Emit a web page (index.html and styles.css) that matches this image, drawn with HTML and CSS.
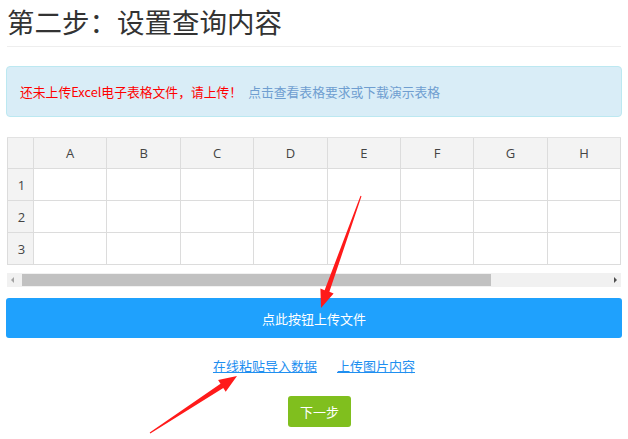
FILE: index.html
```html
<!DOCTYPE html>
<html lang="zh-CN">
<head>
<meta charset="utf-8">
<title>第二步：设置查询内容</title>
<link rel="stylesheet" href="styles.css">
</head>
<body>
<div class="page">
  <h2 class="title">第二步：设置查询内容</h2>
  <div class="alert">
    <span class="warn">还未上传Excel电子表格文件，请上传！</span>
    <a class="alert-link" href="#">点击查看表格要求或下载演示表格</a>
  </div>
  <div class="sheet">
    <div class="grid">
      <div class="cell head corner"></div>
      <div class="cell head">A</div>
      <div class="cell head">B</div>
      <div class="cell head">C</div>
      <div class="cell head">D</div>
      <div class="cell head">E</div>
      <div class="cell head">F</div>
      <div class="cell head">G</div>
      <div class="cell head">H</div>
      <div class="cell head rowh">1</div>
      <div class="cell"></div><div class="cell"></div><div class="cell"></div><div class="cell"></div><div class="cell"></div><div class="cell"></div><div class="cell"></div><div class="cell"></div>
      <div class="cell head rowh">2</div>
      <div class="cell"></div><div class="cell"></div><div class="cell"></div><div class="cell"></div><div class="cell"></div><div class="cell"></div><div class="cell"></div><div class="cell"></div>
      <div class="cell head rowh">3</div>
      <div class="cell"></div><div class="cell"></div><div class="cell"></div><div class="cell"></div><div class="cell"></div><div class="cell"></div><div class="cell"></div><div class="cell"></div>
    </div>
  </div>
  <div class="scrollbar">
    <span class="arrow-l"></span>
    <span class="thumb"></span>
    <span class="arrow-r"></span>
  </div>
  <button class="upload">点此按钮上传文件</button>
  <div class="links">
    <a href="#">在线粘贴导入数据</a>
    <a href="#">上传图片内容</a>
  </div>
  <div class="next-wrap"><button class="next">下一步</button></div>
</div>
<svg class="overlay" width="628" height="439" viewBox="0 0 628 439">
  <polygon fill="#ff1a1a" points="360.5,195.8 361.5,196.2 329.4,291.8 333.6,293.4 321,308 320.4,288.6 324.6,290.2"/>
  <polygon fill="#ff1a1a" points="149.7,432.6 150.3,433.4 223.3,388.0 225.7,391.8 237,376 218.1,380.0 220.5,383.8"/>
</svg>
</body>
</html>
```
FILE: styles.css
```css
* { box-sizing: border-box; }
html, body { margin: 0; padding: 0; background: #fff; }
body {
  font-family: "Noto Sans", "Noto Sans CJK SC", sans-serif;
  color: #333;
  width: 628px;
  height: 439px;
  overflow: hidden;
  position: relative;
}
.page { padding: 0 6px 0 6px; }
.title {
  margin: 0 1px;
  padding: 2px 0 6px 0;
  font-family: "Noto Sans CJK SC", sans-serif;
  font-weight: 400;
  font-size: 27.5px;
  line-height: 38px;
  color: #333;
  border-bottom: 1px solid #eeeeee;
}
.alert {
  margin-top: 19px;
  height: 51px;
  background: #d9edf7;
  border: 1px solid #bce8f1;
  border-radius: 4px;
  padding: 0 13px;
  display: flex;
  align-items: center;
  gap: 6px;
  font-family: "Noto Sans CJK SC", sans-serif;
  font-size: 12.8px;
}
.warn { color: #ff0000; }
.alert-link { color: #6f9ed0; text-decoration: none; }
.sheet {
  margin: 20px 1px 0 1px;
  width: 614px;
  overflow: hidden;
  border-top: 1px solid #e2e2e2;
}
.grid {
  display: grid;
  grid-template-columns: 27px repeat(8, 73.4px);
  grid-template-rows: 31px 32px 32px 32px;
  width: 615px;
}
.cell {
  border-right: 1px solid #dcdcdc;
  border-bottom: 1px solid #dcdcdc;
  background: #fff;
}
.cell.head {
  background: #f3f3f3;
  color: #444;
  font-family: "Open Sans", "Noto Sans", sans-serif;
  font-size: 13px;
  display: flex;
  align-items: center;
  justify-content: center;
}
.cell.corner, .cell.rowh { border-left: 1px solid #dcdcdc; }
.cell.rowh { padding-left: 2px; }
.scrollbar {
  margin: 8px 1px 0 1px;
  height: 14px;
  background: #f1f1f1;
  display: flex;
  align-items: center;
  position: relative;
}
.arrow-l {
  width: 0; height: 0;
  margin-left: 4px;
  border-top: 3px solid transparent;
  border-bottom: 3px solid transparent;
  border-right: 3px solid #a3a3a3;
}
.thumb {
  margin-left: 8px;
  width: 469px;
  height: 12px;
  background: #c1c1c1;
}
.arrow-r {
  width: 0; height: 0;
  margin-left: auto;
  margin-right: 4px;
  border-top: 3px solid transparent;
  border-bottom: 3px solid transparent;
  border-left: 3px solid #505050;
}
.upload {
  display: block;
  width: 616px;
  height: 40px;
  margin-top: 11px;
  border: none;
  border-radius: 3px;
  background: #1fa1fd;
  color: #fff;
  font-family: "Noto Sans CJK SC", sans-serif;
  font-size: 13px;
  cursor: pointer;
}
.links {
  margin-top: 18px;
  display: flex;
  justify-content: center;
  gap: 20px;
  font-family: "Noto Sans CJK SC", sans-serif;
  font-size: 13px;
  line-height: 20px;
}
.links a { color: #1f8ff0; text-decoration: underline; }
.next-wrap {
  margin-top: 20px;
  display: flex;
  justify-content: center;
  padding-left: 11px;
}
.next {
  width: 63px;
  height: 31px;
  border: none;
  border-radius: 3px;
  background: #80bf1e;
  color: #fff;
  font-family: "Noto Sans CJK SC", sans-serif;
  font-size: 13px;
}
.overlay { position: absolute; left: 0; top: 0; pointer-events: none; }
```
